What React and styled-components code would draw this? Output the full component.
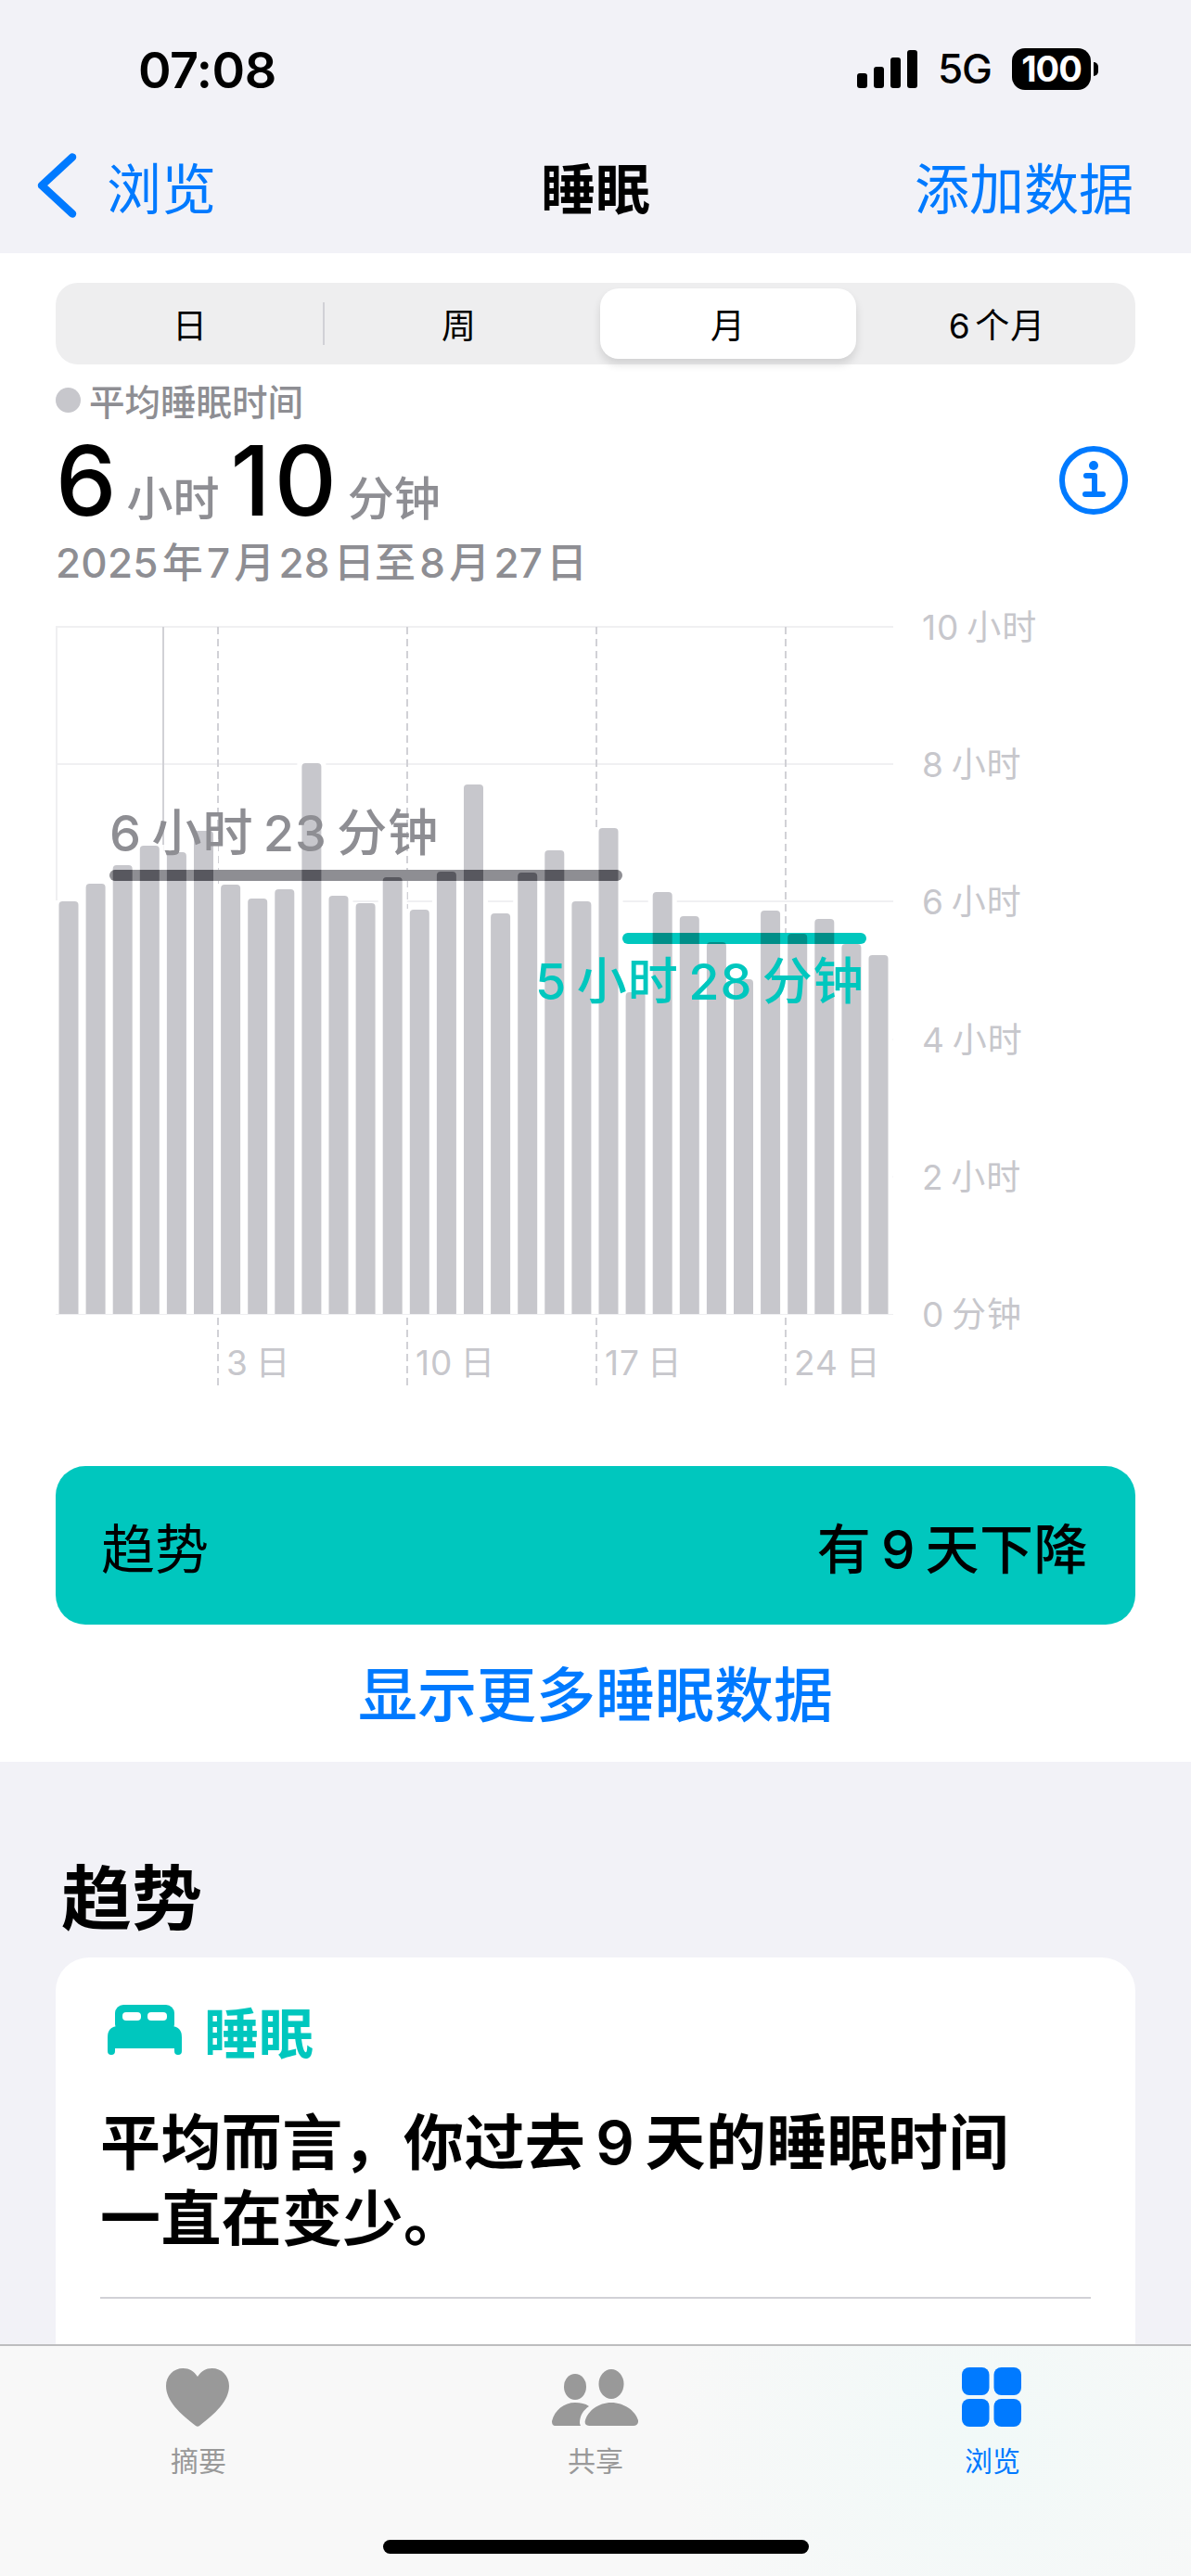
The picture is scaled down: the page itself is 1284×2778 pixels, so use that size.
import React from 'react';
import styled, { createGlobalStyle } from 'styled-components';

const BLUE = '#007aff';
const TEAL = '#00c7be';
const GREY = '#8e8e93';
const FAINT = '#c7c7cc';

const GlobalStyle = createGlobalStyle`
  html, body {
    margin: 0;
    padding: 0;
    background: #f2f2f7;
  }
  body {
    font-family: Inter, "Noto Sans CJK SC", sans-serif;
    color: #000;
  }
`;

const Page = styled.div`
  position: relative;
  width: 1284px;
  height: 2778px;
  overflow: hidden;
  background: #f2f2f7;
`;

const StatusBar = styled.div`
  display: flex;
  align-items: center;
  justify-content: space-between;
  height: 130px;
  padding: 20px 108px 0 149px;
  box-sizing: border-box;
`;

const Clock = styled.span`
  font-size: 54px;
  font-weight: 600;
  letter-spacing: -0.5px;
`;

const StatusRight = styled.div`
  display: flex;
  align-items: center;
  margin-top: -2px;
`;

const Carrier = styled.span`
  font-size: 44px;
  font-weight: 500;
  margin: 0 22px 0 22px;
  letter-spacing: -1px;
`;

const Battery = styled.div`
  position: relative;
  display: flex;
  align-items: center;
  justify-content: center;
  width: 85px;
  height: 45px;
  border-radius: 14px;
  background: #000;
  color: #fff;
  font-size: 38px;
  font-weight: 700;
  letter-spacing: -1px;

  &::after {
    content: '';
    position: absolute;
    left: 88px;
    top: 15px;
    width: 5px;
    height: 15px;
    border-radius: 0 8px 8px 0;
    background: #000;
  }
`;

const NavBar = styled.div`
  display: grid;
  grid-template-columns: 1fr auto 1fr;
  align-items: center;
  height: 143px;
  padding: 0 65px 3px;
  box-sizing: border-box;
`;

const BackLink = styled.div`
  display: flex;
  align-items: center;
  gap: 32px;
  margin-left: -25px;
  color: ${BLUE};
  font-size: 59px;
`;

const NavTitle = styled.div`
  font-size: 59px;
  font-weight: 700;
`;

const NavAction = styled.div`
  justify-self: end;
  margin-right: -3px;
  color: ${BLUE};
  font-size: 59px;
`;

const Panel = styled.section`
  background: #fff;
  padding: 32px 60px;
  height: 1627px;
  box-sizing: border-box;
`;

const Segments = styled.div`
  display: grid;
  grid-template-columns: repeat(4, 1fr);
  height: 88px;
  padding-right: 4px;
  border-radius: 24px;
  background: #eeeeef;
`;

const Segment = styled.div`
  position: relative;
  display: flex;
  align-items: center;
  justify-content: center;
  font-size: 37px;
  letter-spacing: 1px;
  white-space: pre;
  ${(p) => p.$active && `
    margin: 6px 7px;
    border-radius: 20px;
    background: #fff;
    box-shadow: 0 6px 10px rgba(0, 0, 0, 0.12);
  `}
  ${(p) => p.$divider && `
    &::after {
      content: '';
      position: absolute;
      right: 0;
      top: 21px;
      width: 2px;
      height: 46px;
      background: #d1d1d6;
    }
  `}
`;

const Legend = styled.div`
  display: flex;
  align-items: center;
  gap: 9px;
  height: 40px;
  margin-top: 18px;
  color: ${GREY};
  font-size: 38.5px;
  font-weight: 500;
`;

const LegendDot = styled.span`
  width: 27px;
  height: 27px;
  border-radius: 50%;
  background: ${FAINT};
`;

const Summary = styled.div`
  display: flex;
  align-items: center;
  justify-content: space-between;
  height: 110px;
  margin-top: 12px;
  padding-right: 8px;
`;

const SummaryValue = styled.div`
  display: flex;
  align-items: baseline;
`;

const BigNumber = styled.span`
  font-size: 104px;
  font-weight: 500;
  line-height: 110px;
  letter-spacing: ${(p) => p.$tracking || 0}px;
`;

const Unit = styled.span`
  color: ${GREY};
  font-size: 50px;
  font-weight: 500;
  margin: 0 12px 0 ${(p) => p.$left}px;
`;

const DateRange = styled.div`
  height: 50px;
  line-height: 50px;
  margin-top: 9px;
  color: ${GREY};
  font-size: 44px;
  font-weight: 500;
  letter-spacing: 0.2px;
  white-space: pre;
`;

const Chart = styled.div`
  display: flex;
  align-items: flex-start;
  margin-top: 43px;
`;

const Plot = styled.div`
  position: relative;
  width: 903px;
`;

const PlotSvg = styled.svg`
  display: block;
`;

const AverageLabel = styled.span`
  position: absolute;
  left: ${(p) => p.$x}px;
  top: ${(p) => p.$y}px;
  color: ${(p) => p.$color};
  font-size: 54px;
  line-height: 64px;
  font-weight: 500;
  letter-spacing: 1px;
  white-space: pre;
`;

const XAxis = styled.div`
  display: flex;
  height: 77px;
  padding-left: 174px;
`;

const XTick = styled.div`
  flex: none;
  width: 204px;
  box-sizing: border-box;
  padding: 30px 0 0 10px;
  color: ${FAINT};
  font-size: 37px;
  line-height: 44px;
  letter-spacing: 1px;
  white-space: pre;
  background: repeating-linear-gradient(to bottom, transparent 0 3px, #d1d1d6 3px 11px, transparent 11px 13px) left top / 2px 100% no-repeat;
`;

const YAxis = styled.div`
  display: flex;
  flex-direction: column;
  justify-content: space-between;
  height: 781px;
  margin: -18px 0 0 31px;
`;

const YLabel = styled.span`
  height: 40px;
  line-height: 40px;
  color: ${FAINT};
  font-size: 37px;
  letter-spacing: 1px;
  white-space: pre;
`;

const TrendRow = styled.div`
  display: flex;
  align-items: center;
  justify-content: space-between;
  height: 171px;
  margin-top: 86px;
  padding: 0 51px 0 49px;
  border-radius: 32px;
  background: ${TEAL};
  font-size: 58px;
  white-space: pre;
`;

const TrendValue = styled.span`
  font-weight: 500;
  letter-spacing: 0.5px;
`;

const MoreLink = styled.div`
  height: 80px;
  line-height: 80px;
  margin-top: 36px;
  text-align: center;
  color: ${BLUE};
  font-size: 64px;
  font-weight: 500;
`;

const SectionTitle = styled.h2`
  height: 100px;
  margin: 97px 0 14px 66px;
  font-size: 76px;
  line-height: 100px;
  font-weight: 700;
`;

const TrendCard = styled.article`
  margin: 0 60px;
  padding: 51px 48px 0;
  height: 700px;
  box-sizing: border-box;
  border-radius: 36px 36px 0 0;
  background: #fff;
`;

const CardTag = styled.div`
  display: flex;
  align-items: center;
  gap: 24px;
  height: 54px;
  padding-left: 8px;
  color: ${TEAL};
  font-size: 59px;
  font-weight: 600;
`;

const CardText = styled.p`
  margin: 54px 0 0;
  font-size: 65px;
  line-height: 82px;
  font-weight: 600;
  letter-spacing: 0.4px;
  white-space: pre;
`;

const CardRule = styled.hr`
  height: 2px;
  margin: 43px 0 0;
  border: 0;
  background: #d1d1d6;
`;

const TabBar = styled.nav`
  position: absolute;
  left: 0;
  right: 0;
  bottom: 0;
  display: grid;
  grid-template-columns: repeat(3, 1fr);
  height: 250px;
  box-sizing: border-box;
  border-top: 2px solid #bdbdbf;
  background:
    radial-gradient(ellipse 340px 300px at 1050px 100px, #f1f9f8, rgba(241, 249, 248, 0)),
    #f8f8f8;
`;

const Tab = styled.div`
  display: flex;
  flex-direction: column;
  align-items: center;
  padding-top: 23px;
  color: ${(p) => (p.$active ? BLUE : '#999')};
  font-size: 30px;
`;

const TabIcon = styled.div`
  display: flex;
  align-items: center;
  justify-content: center;
  height: 64px;
  margin: 0 2px 13px 0;
`;

const HomeIndicator = styled.div`
  position: absolute;
  left: 413px;
  bottom: 24px;
  width: 459px;
  height: 15px;
  border-radius: 8px;
  background: #000;
`;

// pixel heights of the 31 nights, measured up from the zero line
const BAR_HEIGHTS = [
  445, 464, 484, 505, 498, 521, 463, 448, 458, 594, 451, 443, 471, 436, 477, 571,
  432, 476, 500, 445, 524, 347, 455, 429, 401, 361, 435, 410, 426, 399, 387,
];

const CHART_TOP = 675;
const ZERO_Y = 1417 - CHART_TOP;
const ROW = 148.2;
const BAR_W = 21;
const barX = (i) => 3.5 + i * 29.1;
const barPath = (i) => {
  const x = barX(i);
  const top = ZERO_Y - BAR_HEIGHTS[i];
  return `M${x} ${ZERO_Y}V${top + 4}Q${x} ${top} ${x + 4} ${top}H${x + BAR_W - 4}Q${x + BAR_W} ${top} ${x + BAR_W} ${top + 4}V${ZERO_Y}Z`;
};

const AVERAGES = [
  { id: 'avgDark', x: 58, y: 263, w: 553, fill: GREY, over: '#58585f' },
  { id: 'avgTeal', x: 611, y: 331, w: 263, fill: TEAL, over: '#008e88' },
];

function SleepBars() {
  return (
    <PlotSvg width="903" height="743" viewBox="0 0 903 743">
      <defs>
        {AVERAGES.map((a) => (
          <clipPath id={a.id} key={a.id}>
            <rect x={a.x} y={a.y} width={a.w} height="12" rx="6" />
          </clipPath>
        ))}
      </defs>
      {[0, 1, 2, 3, 4].map((n) => (
        <rect key={n} x="0" y={Math.round(n * ROW)} width="903" height="2" fill="#f0f0f2" />
      ))}
      <rect x="0" y="0" width="2" height={ZERO_Y} fill="#efeff1" />
      <rect x="0" y={ZERO_Y} width="903" height="2" fill="#efeff1" />
      {[174, 378, 582, 786].map((x) => (
        <line key={x} x1={x + 1} x2={x + 1} y1="1" y2={ZERO_Y} stroke="#d1d1d6" strokeWidth="2" strokeDasharray="8 5" />
      ))}
      <rect x="115" y="1" width="2" height="300" fill="#d1d1d6" />
      {BAR_HEIGHTS.map((h, i) => (
        <rect key={i} x={barX(i) - 5} y={ZERO_Y - h - 1} width={BAR_W + 10} height={h + 1} fill="#fff" />
      ))}
      {BAR_HEIGHTS.map((h, i) => (
        <path key={i} d={barPath(i)} fill={FAINT} />
      ))}
      {AVERAGES.map((a) => (
        <g key={a.id}>
          <rect x={a.x} y={a.y} width={a.w} height="12" rx="6" fill={a.fill} />
          <g clipPath={`url(#${a.id})`}>
            {BAR_HEIGHTS.map((h, i) => (
              <path key={i} d={barPath(i)} fill={a.over} />
            ))}
          </g>
        </g>
      ))}
    </PlotSvg>
  );
}

function SignalIcon() {
  return (
    <svg width="65" height="41" viewBox="0 0 65 41" fill="#000">
      <rect x="0" y="25" width="11" height="16" rx="3" />
      <rect x="18" y="18" width="11" height="23" rx="3" />
      <rect x="36" y="8" width="11" height="33" rx="3" />
      <rect x="54" y="0" width="11" height="41" rx="3" />
    </svg>
  );
}

function ChevronIcon() {
  return (
    <svg width="43" height="70" viewBox="0 0 43 70" fill="none">
      <path d="M38 4.500L5 35L38 65.500" stroke={BLUE} strokeWidth="8.500" strokeLinecap="round" strokeLinejoin="round" />
    </svg>
  );
}

function InfoIcon() {
  return (
    <svg width="74" height="74" viewBox="0 0 74 74" fill="none">
      <circle cx="37" cy="37" r="34" stroke={BLUE} strokeWidth="6" />
      <circle cx="37" cy="21" r="5" fill={BLUE} />
      <path d="M29 32H38V52M28 52H47" stroke={BLUE} strokeWidth="6" strokeLinecap="round" strokeLinejoin="round" />
    </svg>
  );
}

function BedIcon() {
  return (
    <svg width="80" height="54" viewBox="0 0 80 54" fill={TEAL}>
      <rect x="8" y="0" width="64" height="30" rx="9" />
      <rect x="16" y="8" width="20" height="9" rx="4" fill="#fff" />
      <rect x="43" y="8" width="21" height="9" rx="4" fill="#fff" />
      <path d="M0 35Q0 23 12 23H68Q80 23 80 35V50Q80 54 76 54Q72 54 72 50V47H8V50Q8 54 4 54Q0 54 0 50Z" />
    </svg>
  );
}

function HeartIcon() {
  return (
    <svg width="68" height="63" viewBox="0 0 68 63" fill="#999">
      <path d="M34 9C30 3 25 0 18.500 0C8 0 0 8 0 19C0 35 15 49 32 62C33 63 35 63 36 62C53 49 68 35 68 19C68 8 60 0 49.500 0C43 0 38 3 34 9Z" />
    </svg>
  );
}

function PeopleIcon() {
  return (
    <svg width="93" height="61" viewBox="0 0 93 61" fill="#999">
      <ellipse cx="64" cy="16" rx="13.500" ry="16" />
      <ellipse cx="25" cy="19" rx="12" ry="14" />
      <path d="M40 61C36 61 35 58 36 55C39 45 50 36 64 36C78 36 90 45 93 55C93.500 59 91 61 88 61Z" />
      <path d="M4 61C1 61 0 59 0 56C3 44 13 36 25 36C31 36 36 37 40 40C34 44 30 50 30 58C30 59 30.500 60 31 61Z" />
    </svg>
  );
}

function BrowseIcon() {
  return (
    <svg width="64" height="64" viewBox="0 0 64 64" fill={BLUE}>
      <rect x="0" y="0" width="29.500" height="30" rx="8" />
      <rect x="34.500" y="0" width="29.500" height="30" rx="8" />
      <rect x="0" y="34" width="29.500" height="30" rx="8" />
      <rect x="34.500" y="34" width="29.500" height="30" rx="8" />
    </svg>
  );
}

export default function App() {
  return (
    <Page>
      <GlobalStyle />
      <StatusBar>
        <Clock>07:08</Clock>
        <StatusRight>
          <SignalIcon />
          <Carrier>5G</Carrier>
          <Battery>100</Battery>
        </StatusRight>
      </StatusBar>
      <NavBar>
        <BackLink>
          <ChevronIcon />
          浏览
        </BackLink>
        <NavTitle>睡眠</NavTitle>
        <NavAction>添加数据</NavAction>
      </NavBar>

      <Panel>
        <Segments>
          <Segment $divider>日</Segment>
          <Segment>周</Segment>
          <Segment $active>月</Segment>
          <Segment>6{'\u200a'}个月</Segment>
        </Segments>
        <Legend>
          <LegendDot />
          平均睡眠时间
        </Legend>
        <Summary>
          <SummaryValue>
            <BigNumber>6</BigNumber>
            <Unit $left={11}>小时</Unit>
            <BigNumber $tracking={4}>10</BigNumber>
            <Unit $left={8}>分钟</Unit>
          </SummaryValue>
          <InfoIcon />
        </Summary>
        <DateRange>2025{'\u200a'}年{'\u200a'}7{'\u200a'}月{'\u200a'}28{'\u200a'}日至{'\u200a'}8{'\u200a'}月{'\u200a'}27{'\u200a'}日</DateRange>

        <Chart>
          <Plot>
            <SleepBars />
            <AverageLabel $x={58} $y={192} $color={GREY}>6{'\u2009'}小时{'\u2009'}23{'\u2009'}分钟</AverageLabel>
            <AverageLabel $x={517} $y={352} $color={TEAL}>5{'\u2009'}小时{'\u2009'}28{'\u2009'}分钟</AverageLabel>
            <XAxis>
              <XTick>3{'\u2009'}日</XTick>
              <XTick>10{'\u2009'}日</XTick>
              <XTick>17{'\u2009'}日</XTick>
              <XTick>24{'\u2009'}日</XTick>
            </XAxis>
          </Plot>
          <YAxis>
            <YLabel>10{'\u2009'}小时</YLabel>
            <YLabel>8{'\u2009'}小时</YLabel>
            <YLabel>6{'\u2009'}小时</YLabel>
            <YLabel>4{'\u2009'}小时</YLabel>
            <YLabel>2{'\u2009'}小时</YLabel>
            <YLabel>0{'\u2009'}分钟</YLabel>
          </YAxis>
        </Chart>

        <TrendRow>
          <span>趋势</span>
          <TrendValue>有{'\u2009'}9{'\u2009'}天下降</TrendValue>
        </TrendRow>
        <MoreLink>显示更多睡眠数据</MoreLink>
      </Panel>

      <SectionTitle>趋势</SectionTitle>
      <TrendCard>
        <CardTag>
          <BedIcon />
          睡眠
        </CardTag>
        <CardText>{'平均而言，你过去\u20099\u2009天的睡眠时间\n一直在变少。'}</CardText>
        <CardRule />
      </TrendCard>

      <TabBar>
        <Tab>
          <TabIcon>
            <HeartIcon />
          </TabIcon>
          摘要
        </Tab>
        <Tab>
          <TabIcon>
            <PeopleIcon />
          </TabIcon>
          共享
        </Tab>
        <Tab $active>
          <TabIcon>
            <BrowseIcon />
          </TabIcon>
          浏览
        </Tab>
      </TabBar>
      <HomeIndicator />
    </Page>
  );
}
